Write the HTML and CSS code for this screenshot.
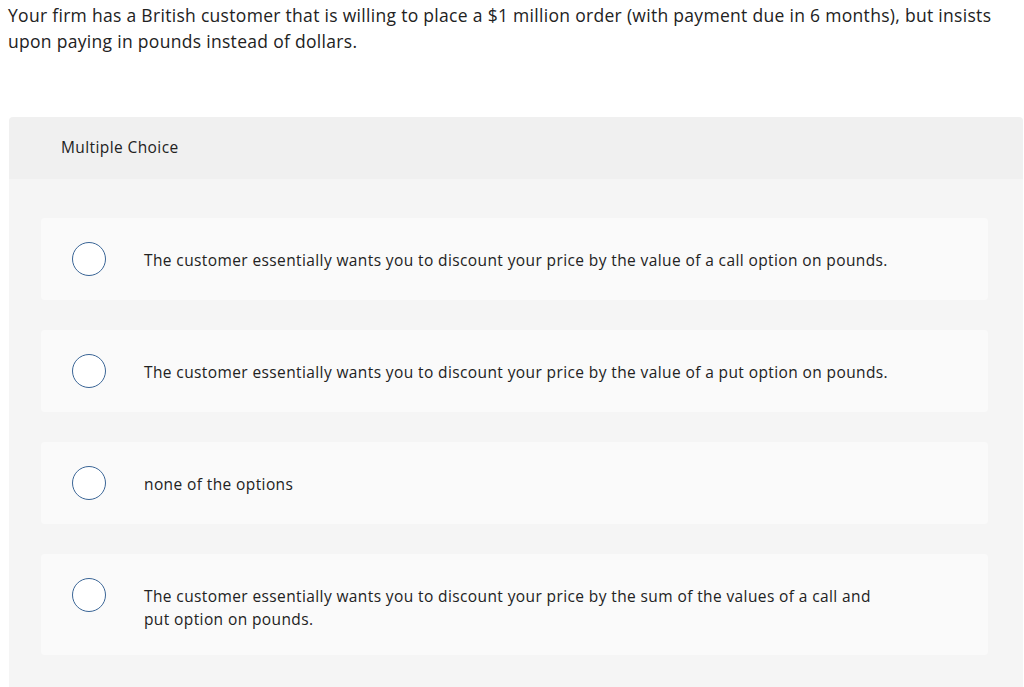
FILE: index.html
```html
<!DOCTYPE html>
<html>
<head>
<meta charset="utf-8">
<link rel="stylesheet" href="styles.css">
</head>
<body>
<p class="question">Your firm has a British customer that is willing to place a $1 million order (with payment due in 6 months), but insists upon paying in pounds instead of dollars.</p>
<div class="panel">
  <div class="panel-head">Multiple Choice</div>
  <div class="panel-body">
    <div class="option"><span class="radio"></span><span class="label">The customer essentially wants you to discount your price by the value of a call option on pounds.</span></div>
    <div class="option"><span class="radio"></span><span class="label">The customer essentially wants you to discount your price by the value of a put option on pounds.</span></div>
    <div class="option"><span class="radio"></span><span class="label">none of the options</span></div>
    <div class="option"><span class="radio"></span><span class="label">The customer essentially wants you to discount your price by the sum of the values of a call and put option on pounds.</span></div>
  </div>
</div>
</body>
</html>
```
FILE: styles.css
```css
html, body {
  margin: 0;
  padding: 0;
  background: #fff;
}
body {
  font-family: "Open Sans", "Liberation Sans", sans-serif;
  color: #222;
  overflow: hidden;
}
.question {
  margin: 0;
  padding: 2px 20px 0 8px;
  font-size: 17.5px;
  letter-spacing: 0.3px;
  line-height: 26px;
  color: #222;
}
.panel {
  margin: 63px 1px 0 9px;
  border-radius: 4px 4px 0 0;
  overflow: hidden;
}
.panel-head {
  background: #f0f0f0;
  height: 62px;
  display: flex;
  align-items: center;
  padding-left: 52px;
  padding-bottom: 2px;
  box-sizing: border-box;
  font-size: 15.5px;
  letter-spacing: 0.4px;
  color: #222;
}
.panel-body {
  background: #f5f5f5;
  padding: 39px 35px 40px 32px;
  display: flex;
  flex-direction: column;
  gap: 30px;
}
.option {
  background: #fafafa;
  border-radius: 4px;
  display: flex;
  align-items: flex-start;
  padding: 24px 96px 24px 31px;
}
.radio {
  flex: none;
  box-sizing: border-box;
  width: 34px;
  height: 34px;
  border: 1.5px solid #3a6596;
  border-radius: 50%;
  background: #fff;
}
.label {
  padding: 7px 0 0 38px;
  font-size: 15.5px;
  letter-spacing: 0.39px;
  line-height: 23px;
  color: #222;
}
```
